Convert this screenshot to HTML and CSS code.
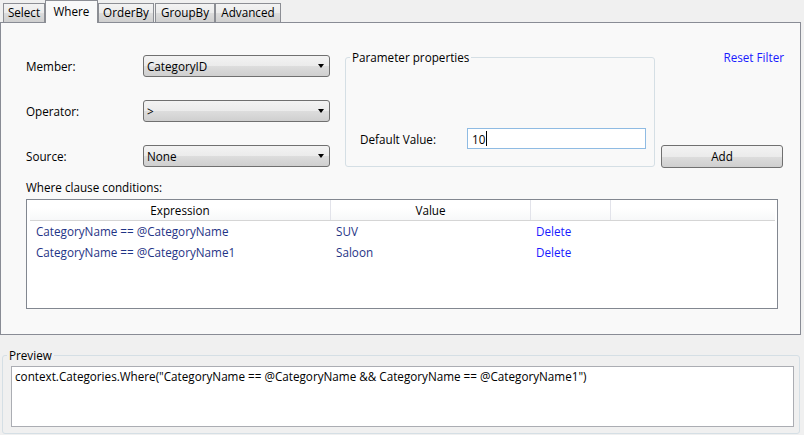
FILE: index.html
```html
<!DOCTYPE html>
<html>
<head>
<meta charset="utf-8">
<link rel="stylesheet" href="styles.css">
</head>
<body>
<div class="tabs">
  <div class="tab t-select">Select</div>
  <div class="tab active t-where">Where</div>
  <div class="tab t-orderby">OrderBy</div>
  <div class="tab t-groupby">GroupBy</div>
  <div class="tab t-advanced">Advanced</div>
</div>
<div class="panel">
  <div class="top">
    <div class="form">
      <div class="frow">
        <span class="flabel">Member:</span>
        <div class="combo"><span class="combo-text">CategoryID</span><span class="arrow"></span></div>
      </div>
      <div class="frow">
        <span class="flabel">Operator:</span>
        <div class="combo"><span class="combo-text">&gt;</span><span class="arrow"></span></div>
      </div>
      <div class="frow">
        <span class="flabel">Source:</span>
        <div class="combo"><span class="combo-text">None</span><span class="arrow"></span></div>
      </div>
    </div>
    <fieldset class="group params">
      <legend>Parameter properties</legend>
      <div class="params-body">
        <div class="dvrow">
          <span class="dvlabel">Default Value:</span>
          <div class="textbox focused"><span>10</span><span class="caret"></span></div>
        </div>
      </div>
    </fieldset>
    <div class="actions">
      <a class="link">Reset Filter</a>
      <div class="btn">Add</div>
    </div>
  </div>
  <div class="section-label">Where clause conditions:</div>
  <div class="grid">
    <div class="ghead">
      <div class="hc c1">Expression</div>
      <div class="hc c2">Value</div>
      <div class="hc c3"></div>
      <div class="hc c4"></div>
    </div>
    <div class="grow">
      <div class="cell c1">CategoryName == @CategoryName</div>
      <div class="cell c2">SUV</div>
      <div class="cell c3"><a class="link">Delete</a></div>
    </div>
    <div class="grow">
      <div class="cell c1">CategoryName == @CategoryName1</div>
      <div class="cell c2">Saloon</div>
      <div class="cell c3"><a class="link">Delete</a></div>
    </div>
  </div>
</div>
<fieldset class="group preview">
  <legend>Preview</legend>
  <div class="preview-body">
    <div class="preview-box">context.Categories.Where("CategoryName == @CategoryName &amp;&amp; CategoryName == @CategoryName1")</div>
  </div>
</fieldset>
</body>
</html>
```
FILE: styles.css
```css
* { box-sizing: border-box; }
html, body { margin: 0; padding: 0; }
body {
  width: 804px;
  height: 435px;
  overflow: hidden;
  background: #f0f0f0;
  font-family: "Open Sans", "Noto Sans", sans-serif;
  font-size: 11.7px;
  color: #000;
}

/* Tabs */
.tabs {
  display: flex;
  align-items: flex-end;
  height: 22px;
  padding-left: 3px;
}
.tab {
  height: 19px;
  line-height: 17px;
  text-align: center;
  border: 1px solid #8c8e94;
  border-bottom: none;
  background: linear-gradient(#f3f3f3 0%, #ebebeb 50%, #dddddd 50%, #cfcfcf 100%);
}
.tab.active {
  height: 23px;
  line-height: 21px;
  margin-bottom: -1px;
  background: #f9f9f9;
  position: relative;
  z-index: 1;
}
.t-select { width: 42px; }
.t-where { width: 53px; }
.t-orderby { width: 56px; }
.t-groupby { width: 60px; margin-left: 1px; }
.t-advanced { width: 66px; }

/* Panel */
.panel {
  width: 801px;
  height: 313px;
  border: 1px solid #898c95;
  background: #f9f9f9;
}
.top {
  display: flex;
  align-items: flex-start;
  padding: 27px 0 0 25px;
}
.form { margin-top: 5px; width: 304px; }
.frow {
  display: flex;
  align-items: center;
  height: 22px;
  margin-bottom: 23px;
}
.frow:last-child { margin-bottom: 0; }
.flabel { width: 117px; }
.combo {
  width: 187px;
  height: 22px;
  border: 1px solid #707070;
  border-radius: 3px;
  background: linear-gradient(#f3f3f3 0%, #ebebeb 50%, #dddddd 50%, #cfcfcf 100%);
  display: flex;
  align-items: center;
  justify-content: space-between;
  padding: 0 5px 0 3px;
}
.arrow {
  width: 0;
  height: 0;
  border-left: 3.5px solid transparent;
  border-right: 3.5px solid transparent;
  border-top: 4px solid #000;
}

/* Group boxes */
.group {
  margin: 0;
  padding: 0;
  border: 1px solid #d5dfe5;
  border-radius: 3px;
  min-width: 0;
}
.group legend {
  margin-left: 4px;
  padding: 0 2px;
  line-height: 15px;
  font-size: 11.7px;
}
.params {
  margin-left: 15px;
  width: 310px;
}
.params-body {
  height: 101px;
  display: flex;
  align-items: flex-end;
  padding: 0 8px 17px 14px;
}
.dvrow { display: flex; align-items: center; width: 100%; }
.dvlabel { width: 107px; }
.textbox {
  flex: 1;
  height: 21px;
  background: #fff;
  border: 1px solid #abadb3;
  display: flex;
  align-items: center;
  padding-left: 4px;
}
.textbox.focused { border-color: #8fbbe3; }
.caret {
  display: inline-block;
  width: 1px;
  height: 15px;
  background: #000;
  margin-left: 1px;
}

.actions {
  margin-left: 6px;
  width: 122px;
  display: flex;
  flex-direction: column;
  align-items: flex-end;
}
.link { color: #1a1aff; text-decoration: none; }
.actions .link { line-height: 15px; margin-right: -1px; }
.btn {
  margin-top: 80px;
  width: 122px;
  height: 23px;
  border: 1px solid #707070;
  border-radius: 3px;
  background: linear-gradient(#f3f3f3 0%, #ebebeb 50%, #dddddd 50%, #cfcfcf 100%);
  text-align: center;
  line-height: 21px;
}

.section-label {
  margin: 12px 0 0 25px;
  line-height: 15px;
}

/* Grid */
.grid {
  margin: 4px 0 0 25px;
  width: 752px;
  height: 110px;
  border: 1px solid #828790;
  background: #fff;
  padding: 0 2px 0 3px;
}
.ghead {
  display: flex;
  height: 21px;
  border-bottom: 1px solid #d5d5d5;
  background: linear-gradient(#ffffff 0%, #ffffff 40%, #f7f8f9 100%);
}
.hc {
  text-align: center;
  line-height: 20px;
  border-right: 1px solid #e2e3ea;
}
.c1 { width: 301px; }
.c2 { width: 200px; }
.c3 { width: 80px; }
.c4 { flex: 1; border-right: none; }
.grow {
  display: flex;
  height: 21px;
  line-height: 21px;
  color: #1f3486;
}
.cell { padding-left: 5px; }
.cell.c1 { padding-left: 6px; }

/* Preview */
.preview {
  margin: 13px 0 0 2px;
  width: 798px;
}
.preview-body {
  padding: 3px 5px 6px 8px;
}
.preview-box {
  height: 61px;
  background: #fff;
  border: 1px solid #abadb3;
  padding: 1px 3px;
  line-height: 16px;
}
```
